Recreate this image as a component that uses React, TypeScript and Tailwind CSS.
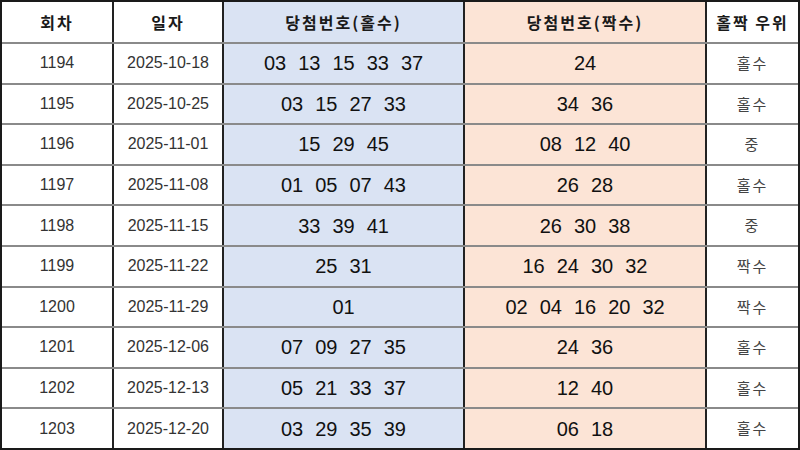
import React from "react";

type Row = { no: string; date: string; odd: string[]; even: string[]; result: string };

const rows: Row[] = [
  { no: "1194", date: "2025-10-18", odd: ["03", "13", "15", "33", "37"], even: ["24"], result: "홀수" },
  { no: "1195", date: "2025-10-25", odd: ["03", "15", "27", "33"], even: ["34", "36"], result: "홀수" },
  { no: "1196", date: "2025-11-01", odd: ["15", "29", "45"], even: ["08", "12", "40"], result: "중" },
  { no: "1197", date: "2025-11-08", odd: ["01", "05", "07", "43"], even: ["26", "28"], result: "홀수" },
  { no: "1198", date: "2025-11-15", odd: ["33", "39", "41"], even: ["26", "30", "38"], result: "중" },
  { no: "1199", date: "2025-11-22", odd: ["25", "31"], even: ["16", "24", "30", "32"], result: "짝수" },
  { no: "1200", date: "2025-11-29", odd: ["01"], even: ["02", "04", "16", "20", "32"], result: "짝수" },
  { no: "1201", date: "2025-12-06", odd: ["07", "09", "27", "35"], even: ["24", "36"], result: "홀수" },
  { no: "1202", date: "2025-12-13", odd: ["05", "21", "33", "37"], even: ["12", "40"], result: "홀수" },
  { no: "1203", date: "2025-12-20", odd: ["03", "29", "35", "39"], even: ["06", "18"], result: "홀수" },
];

const kr = "font-['Noto_Sans_CJK_KR','Noto_Sans',sans-serif]";
const num = "font-['Liberation_Sans','Noto_Sans_CJK_KR',sans-serif]";

function Nums({ list }: { list: string[] }) {
  return (
    <div className={`flex items-center justify-center gap-3 text-[20px] text-[#111] ${num}`}>
      {list.map((n, i) => (
        <span key={i}>{n}</span>
      ))}
    </div>
  );
}

export default function App() {
  return (
    <div className="w-[800px] h-[450px] bg-white border-2 border-[#1a1a1a] flex flex-col">
      <div className={`h-[42px] flex border-b-2 border-[#8a8a8a] font-bold text-[16px] tracking-[2px] text-[#1a1a1a] ${kr}`}>
        <div className="w-[112px] border-r-2 border-[#222] flex items-center justify-center">회차</div>
        <div className="w-[110px] border-r-2 border-[#222] flex items-center justify-center">일자</div>
        <div className="w-[241px] border-r-2 border-[#222] bg-[#dae3f3] flex items-center justify-center">당첨번호(홀수)</div>
        <div className="w-[242px] border-r-2 border-[#222] bg-[#fce4d6] flex items-center justify-center">당첨번호(짝수)</div>
        <div className="w-[91px] flex items-center justify-center">홀짝 우위</div>
      </div>
      {rows.map((r, i) => (
        <div
          key={r.no}
          className={`flex-1 flex ${i < rows.length - 1 ? "border-b-2 border-[#8a8a8a]" : ""}`}
        >
          <div className={`w-[112px] border-r-2 border-[#222] flex items-center justify-center text-[16px] text-[#333] ${num}`}>
            {r.no}
          </div>
          <div className={`w-[110px] border-r-2 border-[#222] flex items-center justify-center text-[16px] text-[#333] ${num}`}>
            {r.date}
          </div>
          <div className="w-[241px] border-r-2 border-[#222] bg-[#dae3f3] flex items-center justify-center">
            <Nums list={r.odd} />
          </div>
          <div className="w-[242px] border-r-2 border-[#222] bg-[#fce4d6] flex items-center justify-center">
            <Nums list={r.even} />
          </div>
          <div className={`w-[91px] flex items-center justify-center text-[15px] tracking-[2px] text-[#444] ${kr}`}>
            {r.result}
          </div>
        </div>
      ))}
    </div>
  );
}
